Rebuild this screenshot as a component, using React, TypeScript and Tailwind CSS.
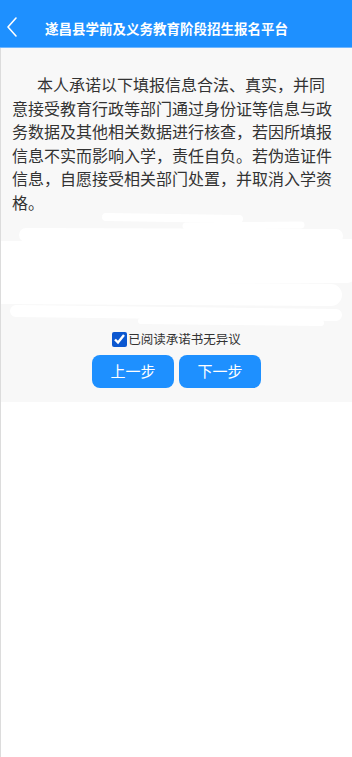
import React from "react";

export default function App() {
  const font = { fontFamily: '"Noto Sans CJK SC", "Noto Sans", sans-serif' };
  return (
    <div className="min-h-[757px] w-[352px] bg-white border-l border-[#dcdcdc]" style={font}>
      <div className="h-[48px] bg-[#1e90ff] border-b border-[#6fb6ff] flex items-center -ml-px">
        <svg width="14" height="22" viewBox="0 0 14 22" className="ml-[5px] mt-[6px]" fill="none">
          <path d="M11 2 L3 11 L11 20" stroke="white" strokeWidth="1.6" strokeLinecap="round" strokeLinejoin="round" />
        </svg>
        <div className="ml-[26px] mt-[11px] text-white font-bold text-[13.5px] leading-none tracking-[0px]">
          遂昌县学前及义务教育阶段招生报名平台
        </div>
      </div>
      <div className="bg-[#f8f8f8] pb-[14px]">
        <p className="pt-[25px] pl-[11px] pr-[16px] text-[16px] leading-[23.6px] text-[#333] indent-[25px]">
          本人承诺以下填报信息合法、真实，并同意接受教育行政等部门通过身份证等信息与政务数据及其他相关数据进行核查，若因所填报信息不实而影响入学，责任自负。若伪造证件信息，自愿接受相关部门处置，并取消入学资格。
        </p>
        <div className="relative h-[121px] -mt-[4px]">
          <svg width="351" height="121" viewBox="0 0 351 121" className="absolute inset-0" fill="none">
            <path d="M105 6 L238 8" stroke="white" strokeWidth="8" strokeLinecap="round" />
            <path d="M185 15 L300 14" stroke="white" strokeWidth="7" strokeLinecap="round" />
            <path d="M25 24 L335 25" stroke="white" strokeWidth="14" strokeLinecap="round" />
            <path d="M0 42 L348 40" stroke="white" strokeWidth="24" strokeLinecap="round" />
            <path d="M0 62 L345 60" stroke="white" strokeWidth="24" strokeLinecap="round" />
            <path d="M0 82 L330 84" stroke="white" strokeWidth="22" strokeLinecap="round" />
            <path d="M15 100 L335 104" stroke="white" strokeWidth="12" strokeLinecap="round" />
            <path d="M140 110 L320 112" stroke="white" strokeWidth="6" strokeLinecap="round" />
          </svg>
        </div>
        <div className="flex flex-col items-center">
          <label className="flex items-center text-[12.5px] text-[#333] leading-none">
            <input type="checkbox" defaultChecked className="w-[15px] h-[15px] m-0 mr-[1px] accent-[#0b57d0]" />
            <span>已阅读承诺书无异议</span>
          </label>
          <div className="flex gap-[5px] mt-[8px]">
            <button className="w-[82px] h-[33px] rounded-[8px] bg-[#1e90ff] text-white text-[15px]">上一步</button>
            <button className="w-[82px] h-[33px] rounded-[8px] bg-[#1e90ff] text-white text-[15px]">下一步</button>
          </div>
        </div>
      </div>
    </div>
  );
}
